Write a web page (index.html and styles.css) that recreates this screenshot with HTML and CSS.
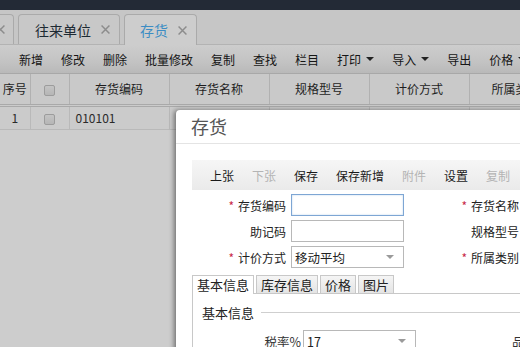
FILE: index.html
```html
<!DOCTYPE html>
<html lang="zh">
<head>
<meta charset="utf-8">
<link rel="stylesheet" href="styles.css">
</head>
<body>
<div class="page">
  <div class="topbar"></div>
  <div class="tabstrip">
    <div class="tab tab-partial"><svg class="x" viewBox="0 0 8 8"><path d="M0.5 0.5L7.5 7.5M7.5 0.5L0.5 7.5"/></svg></div>
    <div class="tab"><span class="tab-label">往来单位</span><svg class="x" viewBox="0 0 8 8"><path d="M0.5 0.5L7.5 7.5M7.5 0.5L0.5 7.5"/></svg></div>
    <div class="tab active"><span class="tab-label">存货</span><svg class="x" viewBox="0 0 8 8"><path d="M0.5 0.5L7.5 7.5M7.5 0.5L0.5 7.5"/></svg></div>
  </div>
  <div class="toolbar">
    <span class="btn">新增</span>
    <span class="btn">修改</span>
    <span class="btn">删除</span>
    <span class="btn">批量修改</span>
    <span class="btn">复制</span>
    <span class="btn">查找</span>
    <span class="btn">栏目</span>
    <span class="btn">打印<i class="caret"></i></span>
    <span class="btn">导入<i class="caret"></i></span>
    <span class="btn">导出</span>
    <span class="btn">价格<i class="caret"></i></span>
  </div>
  <table class="grid">
    <colgroup>
      <col class="c-no"><col class="c-chk"><col class="c-w"><col class="c-w"><col class="c-w"><col class="c-w"><col class="c-w">
    </colgroup>
    <thead>
      <tr>
        <th>序号</th>
        <th><span class="chk"></span></th>
        <th>存货编码</th>
        <th>存货名称</th>
        <th>规格型号</th>
        <th>计价方式</th>
        <th class="clip">所属类别</th>
      </tr>
    </thead>
    <tbody>
      <tr>
        <td class="center">1</td>
        <td class="center"><span class="chk"></span></td>
        <td>010101</td>
        <td></td>
        <td></td>
        <td></td>
        <td></td>
      </tr>
    </tbody>
  </table>
</div>

<div class="modal">
  <div class="modal-title">存货</div>
  <div class="modal-body">
    <div class="mtoolbar">
      <span class="mbtn">上张</span>
      <span class="mbtn disabled">下张</span>
      <span class="mbtn">保存</span>
      <span class="mbtn">保存新增</span>
      <span class="mbtn disabled">附件</span>
      <span class="mbtn">设置</span>
      <span class="mbtn disabled">复制</span>
    </div>
    <div class="form">
      <label class="lbl"><span class="req">*</span>存货编码</label>
      <div class="input focus"></div>
      <label class="lbl"><span class="req">*</span>存货名称</label>
      <div class="input"></div>

      <label class="lbl">助记码</label>
      <div class="input"></div>
      <label class="lbl">规格型号</label>
      <div class="input"></div>

      <label class="lbl"><span class="req">*</span>计价方式</label>
      <div class="input select"><span>移动平均</span><i class="sel-arrow"></i></div>
      <label class="lbl"><span class="req">*</span>所属类别</label>
      <div class="input"></div>
    </div>
    <div class="ftabs">
      <span class="ftab active">基本信息</span>
      <span class="ftab">库存信息</span>
      <span class="ftab">价格</span>
      <span class="ftab">图片</span>
    </div>
    <div class="panel">
      <div class="legend"><span>基本信息</span><i class="legend-line"></i></div>
      <div class="prow">
        <label class="plbl">税率%</label>
        <div class="input select"><span>17</span><i class="sel-arrow"></i></div>
        <label class="plbl2">品牌</label>
      </div>
    </div>
  </div>
</div>
</body>
</html>
```
FILE: styles.css
```css
* { box-sizing: border-box; }
html, body {
  margin: 0;
  padding: 0;
  width: 520px;
  height: 347px;
  overflow: hidden;
  background: #cdcdcd;
  font-family: "Noto Sans CJK SC", "Liberation Sans", sans-serif;
  font-size: 12px;
  color: #1e1e1e;
}
.page { position: relative; width: 520px; height: 347px; }

.topbar { height: 10px; background: #232a36; }

.tabstrip {
  height: 35px;
  background: #c6c6c6;
  display: flex;
  align-items: flex-end;
  gap: 4px;
  padding-left: 0;
  border-bottom: 1px solid #b3b3b3;
}
.tab {
  height: 30px;
  display: flex;
  align-items: center;
  padding: 0 9px 0 16px;
  border: 1px solid #aaaaaa;
  border-bottom: none;
  border-radius: 4px 4px 0 0;
  background: #c8c8c8;
  color: #1d2a33;
  font-size: 14px;
  width: 102px;
  justify-content: space-between;
}
.tab-partial {
  width: 15px;
  margin-left: -1px;
  padding: 0;
  border-left: none;
  border-radius: 0 4px 0 0;
  justify-content: flex-start;
}
.tab-partial .x { margin-left: -3px; }
.tab.active {
  width: 73px;
  padding: 0 9px 0 15px;
  background: #cdcdcd;
  color: #3d8dc4;
  height: 31px;
  margin-bottom: -1px;
}
.x { width: 9px; height: 9px; }
.x path { stroke: #8c8c8c; stroke-width: 1.3; fill: none; }

.toolbar {
  height: 29px;
  display: flex;
  align-items: center;
  padding-left: 10px;
  background: linear-gradient(#cdcdcd, #c3c3c3 60%, #b9b9b9);
  border-bottom: 1px solid #a8a8a8;
}
.btn {
  padding: 0 9px;
  display: flex;
  align-items: center;
  white-space: nowrap;
  color: #151515;
}
.caret {
  display: inline-block;
  margin-left: 5px;
  width: 0; height: 0;
  border-left: 4px solid transparent;
  border-right: 4px solid transparent;
  border-top: 4px solid #222;
}

.grid {
  border-collapse: collapse;
  table-layout: fixed;
  width: 569px;
}
.c-no { width: 30px; }
.c-chk { width: 39px; }
.c-w { width: 100px; }
.grid th {
  height: 31px;
  background: #c9c9c9;
  font-weight: normal;
  text-align: center;
  border-right: 1px solid #b1b1b1;
  border-bottom: 3px double #a9a9a9;
  padding: 0;
  color: #1e1e1e;
  white-space: nowrap;
  overflow: hidden;
}
.grid th.clip { text-align: left; padding-left: 22px; }
.grid td {
  height: 24px;
  background: #cbcbcb;
  border-right: 1px solid #b9b9b9;
  border-bottom: 1px solid #b9b9b9;
  padding: 0 0 0 6px;
  color: #2a2a2a;
}
.grid td.center { text-align: center; padding: 0; }
.chk {
  display: inline-block;
  width: 11px; height: 11px;
  border: 1px solid #9c9c9c;
  border-radius: 2px;
  background: linear-gradient(#c4c4c4, #b6b6b6);
  vertical-align: middle;
}

/* modal */
.modal {
  position: absolute;
  left: 176px;
  top: 110px;
  width: 420px;
  height: 300px;
  background: #ffffff;
  border-radius: 4px 0 0 0;
  box-shadow: -2px 0 5px rgba(0,0,0,0.45);
}
.modal-title {
  height: 34px;
  line-height: 33px;
  padding-left: 15px;
  font-size: 18px;
  color: #555;
  border-bottom: 1px solid #e4e4e4;
}
.modal-body { padding: 16px 0 0 16px; }
.mtoolbar {
  height: 30px;
  display: flex;
  align-items: center;
  padding-left: 9px;
  background: linear-gradient(#f6f6f6, #eaeaea);
}
.mbtn { padding: 0 9px; color: #1a1a1a; white-space: nowrap; font-size: 12px; }
.mbtn.disabled { color: #b4b4b4; }

.form {
  margin-top: 4px;
  display: grid;
  grid-template-columns: 94px 113px 110px 113px;
  column-gap: 5px;
  row-gap: 4px;
  grid-auto-rows: 22px;
}
.lbl {
  display: flex;
  align-items: center;
  justify-content: flex-end;
  white-space: nowrap;
  color: #222;
  font-size: 12px;
}
.req { color: #c8284a; margin-right: 4px; font-size: 12px; }
.input {
  height: 22px;
  border: 1px solid #b8b8b8;
  background: #fff;
}
.input.focus {
  border-color: #7ea6d4;
  box-shadow: inset 0 0 2px #b7d0ec;
}
.select {
  display: flex;
  align-items: center;
  justify-content: space-between;
  padding: 0 9px 0 3px;
  color: #222;
  font-size: 12.5px;
}
.sel-arrow {
  width: 0; height: 0;
  border-left: 4px solid transparent;
  border-right: 4px solid transparent;
  border-top: 4px solid #9a9a9a;
}

.ftabs {
  margin-top: 7px;
  display: flex;
  gap: 2px;
  height: 18px;
  align-items: flex-end;
}
.ftab {
  height: 18px;
  padding: 0 4px;
  font-size: 13px;
  line-height: 17px;
  border: 1px solid #c8c8c8;
  border-bottom: none;
  background: linear-gradient(#f5f5f5, #e4e4e4);
  color: #222;
}
.ftab.active {
  background: #fff;
  height: 19px;
  margin-bottom: -1px;
  position: relative;
}
.panel {
  border: 1px solid #c8c8c8;
  height: 80px;
  padding: 9px 0 0 9px;
}
.legend {
  display: flex;
  align-items: center;
  height: 18px;
  font-size: 13px;
  color: #222;
}
.legend-line {
  flex: 1;
  height: 1px;
  background: #cfcfcf;
  margin-left: 7px;
}
.prow {
  margin-top: 9px;
  display: grid;
  grid-template-columns: 99px 113px 92px auto;
  column-gap: 2px;
  height: 22px;
}
.plbl {
  display: flex;
  align-items: center;
  justify-content: flex-end;
  font-size: 12.5px;
  color: #333;
}
.plbl2 { grid-column: 4; display: flex; align-items: center; font-size: 12.5px; color: #333; white-space: nowrap; }
```
